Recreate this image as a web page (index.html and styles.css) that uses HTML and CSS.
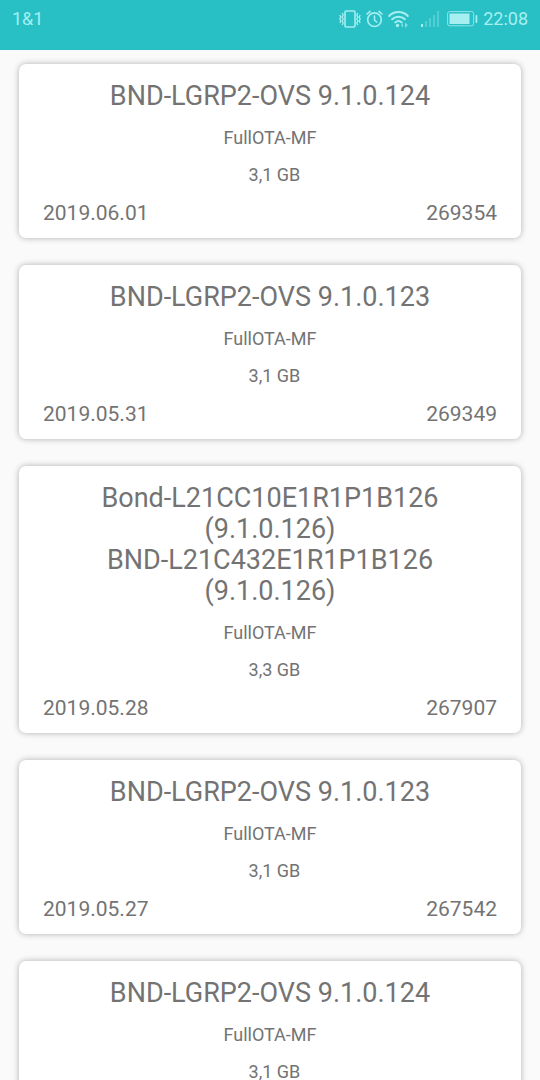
FILE: index.html
```html
<!DOCTYPE html>
<html lang="de">
<head>
    <meta charset="UTF-8">
    <meta name="viewport" content="width=device-width, initial-scale=1.0">
    <title>Firmware</title>
    <link rel="stylesheet" href="styles.css">
</head>
<body>
    <header class="status-bar">
        <span class="carrier">1&amp;1</span>
        <div class="status-icons">
            <svg class="icon-vibrate" width="22" height="18" viewBox="0 0 22 18" fill="none" stroke="currentColor" stroke-width="1.6">
                <rect x="6" y="1" width="10" height="16" rx="1.2"/>
                <path d="M3.200 3l1 2-1 2 1 2-1 2 1 2-1 2M.8 5l1 2-1 2 1 2-1 2M18.800 3l-1 2 1 2-1 2 1 2-1 2 1 2M21.200 5l-1 2 1 2-1 2 1 2" stroke-width="1.300"/>
            </svg>
            <svg class="icon-alarm" width="17" height="18" viewBox="0 0 17 18" fill="none" stroke="currentColor" stroke-width="1.6" stroke-linecap="round">
                <circle cx="8.500" cy="9.700" r="6.800"/>
                <path d="M8.500 6v4.200l2.200 1.800M1 4l3-2.700M16 4l-3-2.700"/>
            </svg>
            <svg class="icon-wifi" width="21" height="18" viewBox="0 0 21 18" fill="none" stroke="currentColor" stroke-width="2" stroke-linecap="round">
                <path d="M1.200 6c5-5.200 13.600-5.200 18.600 0M4.200 9.300c3.400-3.500 9.200-3.500 12.600 0M7.300 12.400c1.900-1.700 4.500-1.700 6.400 0"/>
                <circle cx="9.500" cy="15.500" r="1.700" fill="currentColor" stroke="none"/>
                <path d="M15 13l-2 2.200 2 2.200zM17 12.500l3 2.700-3 2.700z" fill="currentColor" stroke="none" opacity="0.7"/>
            </svg>
            <svg class="icon-signal" width="18" height="18" viewBox="0 0 18 18" fill="currentColor">
                <rect x="0" y="14" width="2" height="3"/>
                <g opacity="0.35">
                    <rect x="4" y="11" width="2" height="6"/>
                    <rect x="8" y="8" width="2" height="9"/>
                    <rect x="12" y="5" width="2" height="12"/>
                    <rect x="16" y="1" width="2" height="16"/>
                </g>
            </svg>
            <svg class="icon-battery" width="31" height="16" viewBox="0 0 31 16">
                <rect x="0.600" y="0.600" width="26" height="14.200" rx="2" fill="none" stroke="currentColor" stroke-width="1" opacity="0.8"/>
                <rect x="2.500" y="2.500" width="20" height="10.500" fill="currentColor"/>
                <rect x="28.500" y="4" width="1.800" height="8" rx="0.8" fill="currentColor"/>
            </svg>
            <span class="clock">22:08</span>
        </div>
    </header>

    <main class="list">
        <article class="card">
            <h2 class="title">BND-LGRP2-OVS 9.1.0.124</h2>
            <p class="info">FullOTA-MF</p>
            <p class="info">&nbsp;&nbsp;3,1 GB</p>
            <div class="card-footer">
                <span>2019.06.01</span>
                <span>269354</span>
            </div>
        </article>

        <article class="card">
            <h2 class="title">BND-LGRP2-OVS 9.1.0.123</h2>
            <p class="info">FullOTA-MF</p>
            <p class="info">&nbsp;&nbsp;3,1 GB</p>
            <div class="card-footer">
                <span>2019.05.31</span>
                <span>269349</span>
            </div>
        </article>

        <article class="card">
            <h2 class="title">Bond-L21CC10E1R1P1B126<br>(9.1.0.126)<br>BND-L21C432E1R1P1B126<br>(9.1.0.126)</h2>
            <p class="info">FullOTA-MF</p>
            <p class="info">&nbsp;&nbsp;3,3 GB</p>
            <div class="card-footer">
                <span>2019.05.28</span>
                <span>267907</span>
            </div>
        </article>

        <article class="card">
            <h2 class="title">BND-LGRP2-OVS 9.1.0.123</h2>
            <p class="info">FullOTA-MF</p>
            <p class="info">&nbsp;&nbsp;3,1 GB</p>
            <div class="card-footer">
                <span>2019.05.27</span>
                <span>267542</span>
            </div>
        </article>

        <article class="card">
            <h2 class="title">BND-LGRP2-OVS 9.1.0.124</h2>
            <p class="info">FullOTA-MF</p>
            <p class="info">&nbsp;&nbsp;3,1 GB</p>
        </article>
    </main>
</body>
</html>
```
FILE: styles.css
```css
* {
    box-sizing: border-box;
}
body {
    margin: 0;
    height: 100vh;
    overflow: hidden;
    font-family: Roboto, Arial, sans-serif;
    background-color: #fafafa;
    color: #737373;
}
.status-bar {
    display: flex;
    justify-content: space-between;
    align-items: center;
    height: 50px;
    padding: 0 12px 13px;
    background-color: #28bfc5;
    color: #a5eff0;
    font-size: 18px;
}
.status-icons {
    display: flex;
    align-items: center;
}
.icon-alarm,
.icon-wifi {
    margin-left: 5px;
}
.icon-signal {
    margin-left: 12px;
}
.icon-battery {
    margin: 0 5px 0 8px;
}
.list {
    display: flex;
    flex-direction: column;
    gap: 27px;
    padding: 14px 19px;
}
.card {
    padding: 17px 24px 12px;
    background-color: white;
    border-radius: 7px;
    box-shadow: 0 0 6px rgba(0, 0, 0, 0.3);
    text-align: center;
}
.title {
    margin: 0;
    font-size: 27px;
    font-weight: 400;
    line-height: 31px;
}
.info {
    margin: 16px 0 0;
    font-size: 18px;
    line-height: 21px;
}
.title + .info {
    margin-top: 15px;
}
.card-footer {
    display: flex;
    justify-content: space-between;
    margin-top: 16px;
    font-size: 21px;
    line-height: 25px;
}
```
